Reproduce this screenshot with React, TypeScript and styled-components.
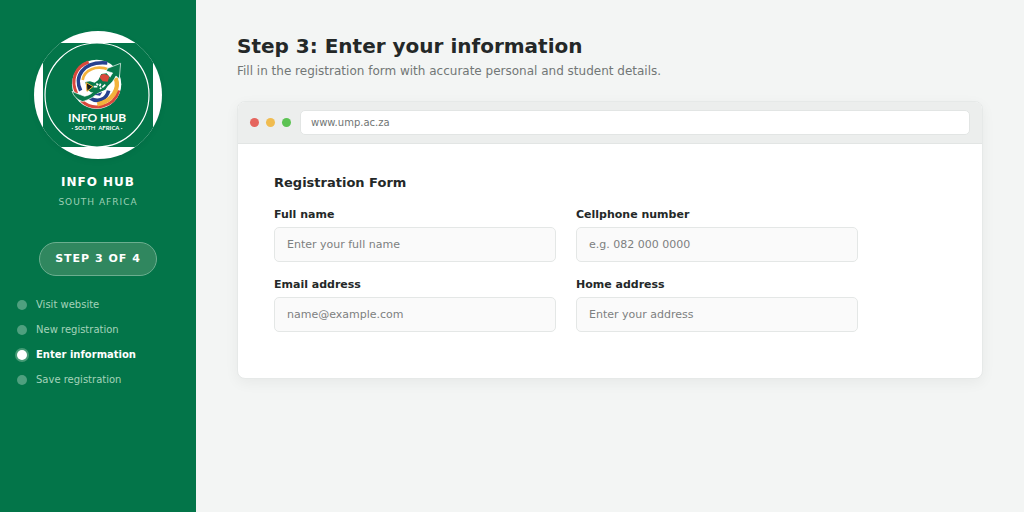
import React from "react";
import styled, { createGlobalStyle } from "styled-components";

const GlobalStyle = createGlobalStyle`
  * { box-sizing: border-box; }
  body {
    margin: 0;
    background: #f3f5f4;
    color: #242828;
    font-family: "DejaVu Sans", sans-serif;
  }
  h1, h2, p, ol { margin: 0; padding: 0; }
`;

const Page = styled.div`
  display: flex;
  min-height: 100vh;
`;

const Sidebar = styled.aside`
  flex: 0 0 196px;
  display: flex;
  flex-direction: column;
  align-items: center;
  padding: 31px 16px;
  background: #037549;
  color: #ffffff;
`;

const LogoDisc = styled.div`
  width: 128px;
  height: 128px;
  border-radius: 50%;
  overflow: hidden;
  background: #ffffff;
  box-shadow: 0 2px 6px rgba(0, 0, 0, 0.06);

  svg { display: block; }
`;

const BrandName = styled.p`
  margin-top: 15px;
  font-size: 12px;
  line-height: 16px;
  font-weight: 700;
  letter-spacing: 1px;
`;

const BrandRegion = styled.p`
  margin-top: 4px;
  font-size: 9px;
  line-height: 16px;
  letter-spacing: 1px;
  color: #9ed0b6;
`;

const StepBadge = styled.p`
  margin-top: 32px;
  padding: 8px 15px;
  border: 1px solid #6bae8f;
  border-radius: 17px;
  background: #30875f;
  font-size: 11px;
  line-height: 16px;
  font-weight: 700;
  letter-spacing: 1px;
`;

const StepList = styled.ol`
  align-self: stretch;
  margin-top: 16px;
  list-style: none;
`;

const StepItem = styled.li<{ $active?: boolean }>`
  display: flex;
  align-items: center;
  gap: 9px;
  height: 25px;
  font-size: 10px;
  line-height: 16px;
  font-weight: ${(p) => (p.$active ? 700 : 400)};
  color: ${(p) => (p.$active ? "#ffffff" : "#a3d3ba")};

  &::before {
    content: "";
    width: 10px;
    height: 10px;
    margin-left: 1px;
    border-radius: 50%;
    background: ${(p) => (p.$active ? "#ffffff" : "#4fa07f")};
    box-shadow: ${(p) => (p.$active ? "0 0 0 2px #469b76" : "none")};
  }
`;

const Main = styled.main`
  flex: 1;
  min-width: 0;
  padding: 34px 41px;
`;

const Title = styled.h1`
  font-size: 20px;
  line-height: 24px;
  font-weight: 700;
`;

const Subtitle = styled.p`
  margin-top: 5px;
  font-size: 12px;
  line-height: 16px;
  color: #727776;
`;

const BrowserCard = styled.section`
  margin-top: 22px;
  border: 1px solid #e6e9e8;
  border-radius: 8px;
  overflow: hidden;
  background: #ffffff;
  box-shadow: 0 4px 14px rgba(0, 0, 0, 0.05);
`;

const BrowserBar = styled.div`
  display: flex;
  align-items: center;
  gap: 7px;
  padding: 8px 12px;
  background: #eceeed;
  border-bottom: 1px solid #e2e5e4;
`;

const WindowDot = styled.span<{ $color: string }>`
  width: 9px;
  height: 9px;
  border-radius: 50%;
  background: ${(p) => p.$color};
`;

const AddressInput = styled.input`
  flex: 1;
  min-width: 0;
  height: 25px;
  margin-left: 2px;
  padding: 0 10px;
  border: 1px solid #e2e5e4;
  border-radius: 5px;
  background: #ffffff;
  color: #707574;
  font: 10px "DejaVu Sans", sans-serif;
`;

const Form = styled.form`
  padding: 31px 36px 46px;
`;

const FormTitle = styled.h2`
  font-size: 13px;
  line-height: 16px;
  font-weight: 700;
`;

const FieldGrid = styled.div`
  display: grid;
  grid-template-columns: 1fr 1fr;
  gap: 15px 20px;
  max-width: 584px;
  margin-top: 16px;
`;

const Field = styled.label`
  display: flex;
  flex-direction: column;
  gap: 4px;
  font-size: 11px;
  line-height: 16px;
  font-weight: 700;
`;

const FieldInput = styled.input`
  width: 100%;
  height: 35px;
  padding: 0 12px;
  border: 1px solid #e4e7e6;
  border-radius: 5px;
  background: #fafafa;
  color: #242828;
  font: 11px "DejaVu Sans", sans-serif;

  &::placeholder { color: #7d8080; opacity: 1; }
`;

const LogoText = styled.text`
  font-family: "Lato", sans-serif;
  font-weight: 700;
  fill: #ffffff;
  text-anchor: middle;
`;

const Logo = () => (
  <svg width="128" height="128" viewBox="0 0 128 128" role="img" aria-label="Info Hub South Africa">
    <rect x="9" y="12" width="110" height="104" fill="#037549" />
    <circle cx="63" cy="64" r="52" fill="none" stroke="#ffffff" strokeWidth="1.200" />
    <g transform="translate(34 25) scale(0.333)">
      <circle cx="86" cy="85" r="74" fill="#ffffff" />
      <g fill="none">
        <path d="M62 18C22 32 7 72 26 112" stroke="#d9483c" strokeWidth="9" />
        <path d="M38 104C18 66 42 14 118 21" stroke="#26418f" strokeWidth="11" />
        <path d="M44 72C48 42 84 26 124 41" stroke="#f3b33c" strokeWidth="8" />
        <path d="M40 134C76 168 138 154 153 103" stroke="#d9483c" strokeWidth="9" />
        <path d="M66 126C90 142 116 130 122 104" stroke="#26418f" strokeWidth="11" />
        <path d="M143 66C156 98 134 136 88 145" stroke="#f3b33c" strokeWidth="13" />
      </g>
      <path d="M12 106L26 112L50 121C68 118 78 106 88 96L122 70L134 51L115 45L119 37L158 22L154 68L144 60C132 86 112 96 98 104C80 121 68 130 44 137C28 132 17 121 12 106Z" fill="#0a7a4c" stroke="#ffffff" strokeWidth="2" />
      <path d="M52 78L66 76L80 80L91 72L100 54L116 52L126 64L124 82L112 101L91 110L69 109L57 100Z" fill="#0a7a4c" />
      <path d="M55 80L75 92L57 106Z" fill="#171d1a" stroke="#f3b33c" strokeWidth="3" />
      <path d="M96 66C95 53 113 49 124 62L119 77L104 76Z" fill="#d9483c" />
      <path d="M77 92H88M85 83L91 87M98 83L95 91M103 94L112 86M96 99L100 95" stroke="#ffffff" strokeWidth="5" />
      <path d="M79 116L103 108L96 119Z" fill="#26418f" />
    </g>
    <LogoText x="63" y="91" fontSize="12">INFO HUB</LogoText>
    <LogoText x="63" y="99" fontSize="6">·&nbsp;SOUTH&nbsp; AFRICA&nbsp;·</LogoText>
  </svg>
);

const steps = ["Visit website", "New registration", "Enter information", "Save registration"];

const fields = [
  { id: "name", label: "Full name", type: "text", placeholder: "Enter your full name" },
  { id: "cell", label: "Cellphone number", type: "tel", placeholder: "e.g. 082 000 0000" },
  { id: "email", label: "Email address", type: "email", placeholder: "name@example.com" },
  { id: "home", label: "Home address", type: "text", placeholder: "Enter your address" },
];

export default function App() {
  return (
    <>
      <GlobalStyle />
      <Page>
        <Sidebar>
          <LogoDisc><Logo /></LogoDisc>
          <BrandName>INFO HUB</BrandName>
          <BrandRegion>SOUTH AFRICA</BrandRegion>
          <StepBadge>STEP 3 OF 4</StepBadge>
          <StepList>
            {steps.map((step, i) => (
              <StepItem key={step} $active={i === 2} aria-current={i === 2 ? "step" : undefined}>
                {step}
              </StepItem>
            ))}
          </StepList>
        </Sidebar>
        <Main>
          <Title>Step 3: Enter your information</Title>
          <Subtitle>Fill in the registration form with accurate personal and student details.</Subtitle>
          <BrowserCard>
            <BrowserBar>
              <WindowDot $color="#e5655e" />
              <WindowDot $color="#f0bc50" />
              <WindowDot $color="#5cc353" />
              <AddressInput type="text" aria-label="Website address" defaultValue="www.ump.ac.za" />
            </BrowserBar>
            <Form>
              <FormTitle>Registration Form</FormTitle>
              <FieldGrid>
                {fields.map((f) => (
                  <Field key={f.id} htmlFor={f.id}>
                    {f.label}
                    <FieldInput id={f.id} name={f.id} type={f.type} placeholder={f.placeholder} />
                  </Field>
                ))}
              </FieldGrid>
            </Form>
          </BrowserCard>
        </Main>
      </Page>
    </>
  );
}
